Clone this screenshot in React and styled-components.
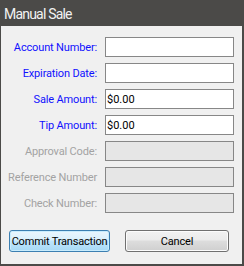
import React from "react";
import styled, { createGlobalStyle } from "styled-components";

const Global = createGlobalStyle`
  html, body { margin: 0; padding: 0; background: #f0f0f0; }
  * { box-sizing: border-box; }
`;

const Window = styled.div`
  width: 244px;
  height: 266px;
  display: flex;
  flex-direction: column;
  background: #f0f0f0;
  border-left: 1px solid #4b4a48;
  border-right: 2px solid #4b4a48;
  border-bottom: 2px solid #4b4a48;
  font-family: Roboto, "Liberation Sans", sans-serif;
`;

const TitleBar = styled.div`
  height: 26px;
  flex: none;
  background: #4b4a48;
  color: #f2f2f2;
  font-size: 14px;
  letter-spacing: -0.8px;
  display: flex;
  align-items: center;
  padding-left: 3px;
  padding-top: 1px;
`;

const Form = styled.div`
  display: grid;
  grid-template-columns: 1fr 129px;
  column-gap: 8px;
  row-gap: 6px;
  padding: 11px 8px 0 0;
`;

const Label = styled.div`
  height: 20px;
  display: flex;
  align-items: center;
  justify-content: flex-end;
  font-size: 11px;
  letter-spacing: -0.15px;
  white-space: nowrap;
  color: ${(p) => (p.$disabled ? "#a3a3a3" : "#1111ff")};
`;

const Field = styled.div`
  height: 20px;
  border: 1px solid #878787;
  background: ${(p) => (p.$disabled ? "#e6e6e6" : "#ffffff")};
  color: #000;
  font-size: 11px;
  display: flex;
  align-items: center;
  padding-left: 1px;
`;

const Buttons = styled.div`
  display: flex;
  gap: 15px;
  padding: 17px 0 0 8px;
`;

const Button = styled.div`
  width: ${(p) => p.$w}px;
  height: 22px;
  border-radius: 3px;
  border: 1px solid ${(p) => (p.$primary ? "#3c7fb1" : "#707070")};
  box-shadow: inset 0 0 0 1px ${(p) => (p.$primary ? "#c8ecfd" : "#fcfcfc")};
  background: ${(p) =>
    p.$primary
      ? "linear-gradient(#eaf6fd 0%, #d9f0fc 45%, #bee6fd 50%, #a7d9f5 100%)"
      : "linear-gradient(#f2f2f2 0%, #ebebeb 45%, #dddddd 50%, #cfcfcf 100%)"};
  color: #000;
  font-size: 11px;
  letter-spacing: -0.2px;
  display: flex;
  align-items: center;
  justify-content: center;
  white-space: nowrap;
`;

const rows = [
  { label: "Account Number:", value: "" },
  { label: "Expiration Date:", value: "" },
  { label: "Sale Amount:", value: "$0.00" },
  { label: "Tip Amount:", value: "$0.00" },
  { label: "Approval Code:", disabled: true },
  { label: "Reference Number", disabled: true },
  { label: "Check Number:", disabled: true },
];

export default function App() {
  return (
    <>
      <Global />
      <Window>
        <TitleBar>Manual Sale</TitleBar>
        <Form>
          {rows.map((r) => (
            <React.Fragment key={r.label}>
              <Label $disabled={r.disabled}>{r.label}</Label>
              <Field $disabled={r.disabled}>{r.value}</Field>
            </React.Fragment>
          ))}
        </Form>
        <Buttons>
          <Button $primary $w={101}>Commit Transaction</Button>
          <Button $w={104}>Cancel</Button>
        </Buttons>
      </Window>
    </>
  );
}
